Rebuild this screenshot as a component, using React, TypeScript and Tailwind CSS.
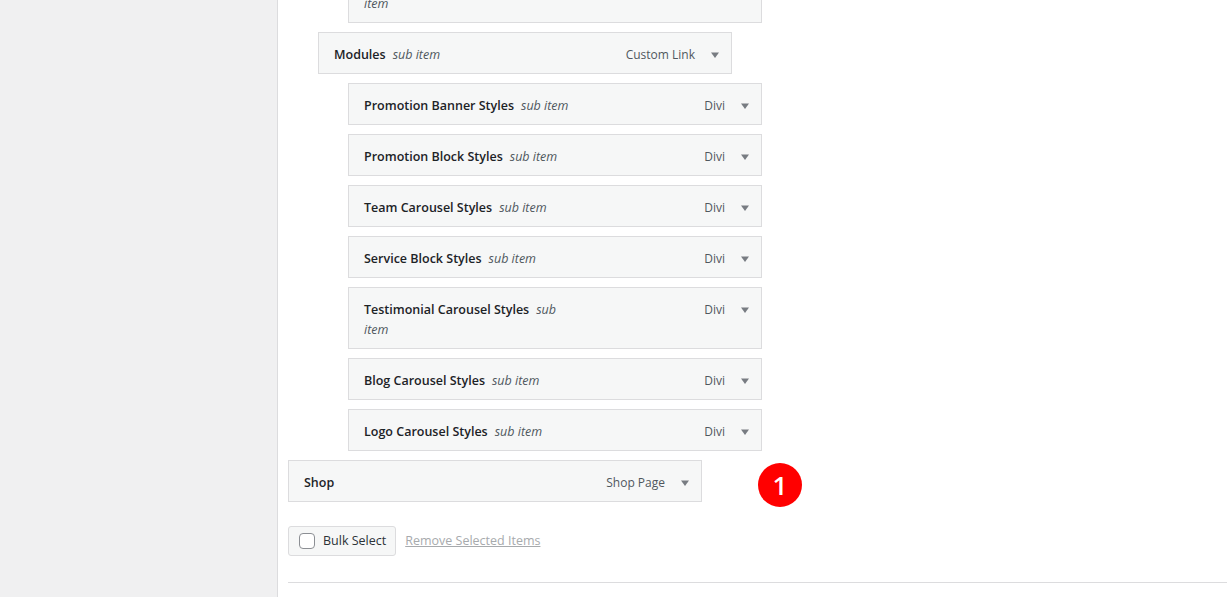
import React from "react";

type Item = {
  title: string;
  type: string;
  depth: 0 | 1 | 2;
  sub?: boolean;
};

const ITEMS: Item[] = [
  { title: "Product Carousel Styles", type: "Divi", depth: 2, sub: true },
  { title: "Modules", type: "Custom Link", depth: 1, sub: true },
  { title: "Promotion Banner Styles", type: "Divi", depth: 2, sub: true },
  { title: "Promotion Block Styles", type: "Divi", depth: 2, sub: true },
  { title: "Team Carousel Styles", type: "Divi", depth: 2, sub: true },
  { title: "Service Block Styles", type: "Divi", depth: 2, sub: true },
  { title: "Testimonial Carousel Styles", type: "Divi", depth: 2, sub: true },
  { title: "Blog Carousel Styles", type: "Divi", depth: 2, sub: true },
  { title: "Logo Carousel Styles", type: "Divi", depth: 2, sub: true },
  { title: "Shop", type: "Shop Page", depth: 0 },
];

const DEPTH_CLASS: Record<number, string> = {
  0: "ml-0",
  1: "ml-[30px]",
  2: "ml-[60px]",
};

function Arrow() {
  return (
    <svg width="10" height="6" viewBox="0 0 10 6" className="block">
      <path d="M1 0.5 L9 0.5 L5 6 Z" fill="#787c82" />
    </svg>
  );
}

function MenuItem({ item, first }: { item: Item; first: boolean }) {
  return (
    <div
      className={`relative ${DEPTH_CLASS[item.depth]} ${
        first ? "mt-[-39px]" : "mt-[9px]"
      } w-[414px]`}
    >
      <div className="flex items-start justify-between border border-[#dcdcde] bg-[#f6f7f7] pl-[15px] pr-[11px] pt-[12px] pb-[8px] leading-[20px]">
        <div
          className={`${
            first ? "max-w-[175px]" : "max-w-[212px]"
          } text-[12.5px] leading-[20px] text-[#1d2327]`}
        >
          <span className="font-semibold">{item.title}</span>
          {item.sub && (
            <span className="ml-[7px] italic text-[#50575e]">sub item</span>
          )}
        </div>
        <div className="flex items-center">
          <span className="text-[12px] text-[#50575e]">{item.type}</span>
          <span className="ml-[15px] flex h-[20px] w-[10px] items-center justify-center">
            <Arrow />
          </span>
        </div>
      </div>
      {item.depth === 0 && (
        <div className="absolute left-[470px] top-[3px] flex h-[44px] w-[44px] items-center justify-center rounded-full bg-[#ff0000] text-[26px] font-semibold text-white">
          1
        </div>
      )}
    </div>
  );
}

export default function App() {
  return (
    <div
      className="flex h-[597px] w-full overflow-hidden bg-white"
      style={{ fontFamily: '"Open Sans", "Noto Sans", sans-serif' }}
    >
      <div className="w-[278px] shrink-0 border-r border-[#dcdcde] bg-[#f0f0f1]" />
      <div className="flex-1 pl-[10px]">
        <div className="flex flex-col">
          {ITEMS.map((item, i) => (
            <MenuItem key={item.title} item={item} first={i === 0} />
          ))}
        </div>

        <div className="mt-[24px] flex items-center">
          <label className="flex h-[30px] items-center rounded-[3px] border border-[#dcdcde] bg-[#f6f7f7] pl-[10px] pr-[9px]">
            <span className="block h-[16px] w-[16px] rounded-[4px] border border-[#8c8f94] bg-white" />
            <span className="ml-[8px] pt-[1px] text-[12.5px] text-[#2c3338]">
              Bulk Select
            </span>
          </label>
          <span className="ml-[9px] pt-[1px] text-[12.5px] text-[#a7aaad] underline">
            Remove Selected Items
          </span>
        </div>

        <div className="mt-[26px] border-t border-[#dcdcde]" />
      </div>
    </div>
  );
}
